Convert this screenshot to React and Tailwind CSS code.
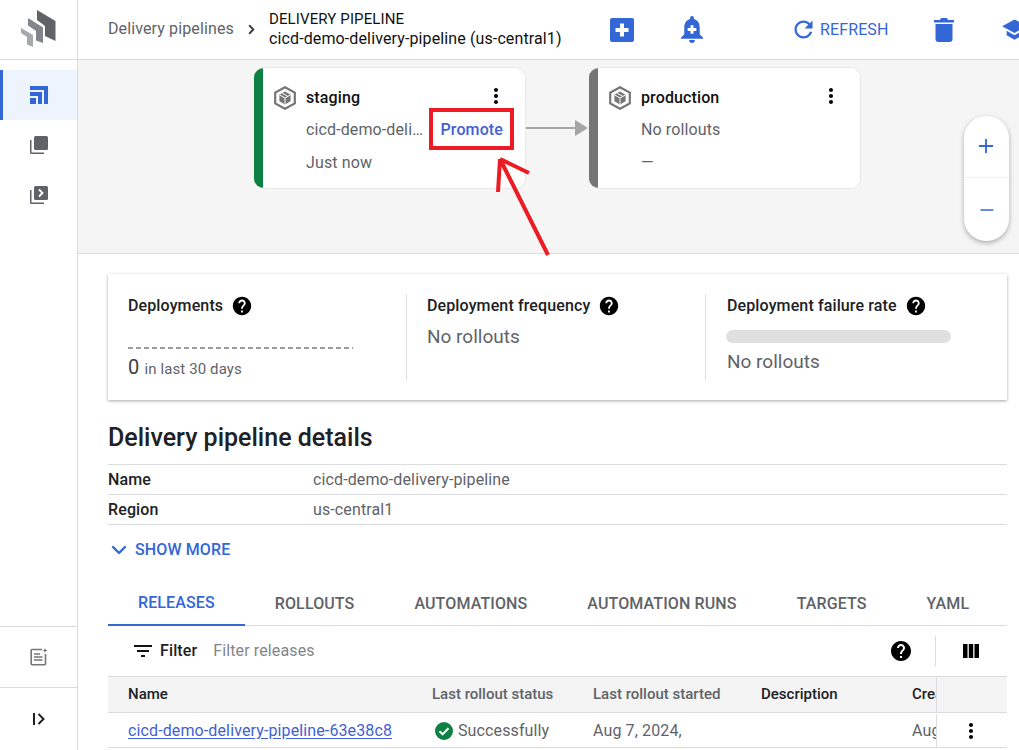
import { Plus, Minus, ChevronDown, ChevronRight } from 'lucide-react';

const Dots = ({ className = '' }) => (
  <svg viewBox="0 0 24 24" className={`w-6 h-6 ${className}`} fill="currentColor">
    <path d="M12 8c1.1 0 2-.9 2-2s-.9-2-2-2-2 .9-2 2 .9 2 2 2zm0 2c-1.1 0-2 .9-2 2s.9 2 2 2 2-.9 2-2-.9-2-2-2zm0 6c-1.1 0-2 .9-2 2s.9 2 2 2 2-.9 2-2-.9-2-2-2z" />
  </svg>
);

const Help = ({ className = '' }) => (
  <svg viewBox="0 0 24 24" className={`text-black shrink-0 ${className}`} fill="currentColor">
    <path d="M12 2C6.48 2 2 6.48 2 12s4.48 10 10 10 10-4.48 10-10S17.52 2 12 2zm1 17h-2v-2h2v2zm2.07-7.75l-.9.92C13.45 12.9 13 13.5 13 15h-2v-.5c0-1.1.45-2.1 1.17-2.83l1.24-1.26c.37-.36.59-.86.59-1.41 0-1.1-.9-2-2-2s-2 .9-2 2H8c0-2.21 1.79-4 4-4s4 1.79 4 4c0 .88-.36 1.68-.93 2.25z" />
  </svg>
);

const TargetIcon = () => (
  <svg viewBox="0 0 22 24" className="w-[22px] h-[24px] shrink-0 text-[#757575]" fill="none" stroke="currentColor">
    <path d="M11 1.2 20.8 6.6V17.4L11 22.8 1.2 17.4V6.6Z" strokeWidth="2.2" />
    <path d="M11 5.6 16.6 8.8V15.2L11 18.4 5.4 15.2V8.8Z" fill="currentColor" stroke="none" />
    <path d="M5.6 8.9 11 12 16.4 8.9M11 12V18.2M8.2 7.2 13.8 10.4" stroke="#fff" strokeWidth="1" />
  </svg>
);

const Logo = () => (
  <svg viewBox="0 0 48 44" className="w-12 h-11">
    <path d="M22 5 40.5 16V36L30 31V21L22 15Z" fill="#5f6368" />
    <path d="M13 13 28 22.5V38L21 35.5V26L13 20.5Z" fill="#80868b" />
    <path d="M6 23 18 30V42L12 39.5V32L6 28Z" fill="#a5a9ad" />
  </svg>
);

const PipelineNode = ({ name, barClass, line1, line2, promote, className }) => (
  <div className={`absolute top-[7px] w-[272px] h-[122px] bg-white rounded-[10px] border border-l-0 border-[#e8e8e8] overflow-hidden flex ${className}`}>
    <div className={`w-[9px] shrink-0 ${barClass}`} />
    <div className="relative flex-1 pl-[11px] pt-[16px]">
      <div className="flex items-center h-[28px]">
        <TargetIcon />
        <span className="ml-[10px] font-medium text-[#111]">{name}</span>
      </div>
      <Dots className="absolute right-[17px] top-[16px] text-black" />
      <div className="pl-[32px] mt-[1px] leading-[33px] text-[#5f6368]">
        <div className="flex justify-between pr-[22px]">
          <span>{line1}</span>
          {promote && <span className="font-medium text-[#3f5fd3]">Promote</span>}
        </div>
        <div>{line2}</div>
      </div>
    </div>
  </div>
);

const Metric = ({ title, children, className = '' }) => (
  <div className={`h-[86px] ${className}`}>
    <div className="flex items-center h-[24px] font-medium text-[#202124]">
      {title}
      <Help className="ml-[8px] w-[22px] h-[22px]" />
    </div>
    {children}
  </div>
);

const NavItem = ({ children, active }) => (
  <div className={`h-[50px] flex items-center justify-center ${active ? 'bg-[#eef4fd] border-l-[3px] border-[#3367d6] pr-[3px]' : ''}`}>
    {children}
  </div>
);

const TrashIcon = () => (
  <svg viewBox="0 0 20 24" className="ml-[45px] w-[20px] h-[24px] shrink-0" fill="#3367d6">
    <path d="M7 0H13L14 2H20V4.5H0V2H6Z" />
    <path d="M1.5 6H18.5V21A3 3 0 0 1 15.5 24H4.5A3 3 0 0 1 1.5 21Z" />
  </svg>
);

export default function App() {
  const tabs = ['RELEASES', 'ROLLOUTS', 'AUTOMATIONS', 'AUTOMATION RUNS', 'TARGETS', 'YAML'];

  return (
    <div className="relative w-[1019px] h-[750px] overflow-hidden flex bg-white font-['Roboto',sans-serif] text-[16px] tracking-[0.12px]">
      {/* Sidebar */}
      <aside className="w-[78px] shrink-0 border-r border-[#dadce0] flex flex-col">
        <div className="h-[60px] border-b border-[#dadce0] flex items-center justify-center pb-[6px]">
          <Logo />
        </div>
        <div className="pt-[10px] flex-1">
          <NavItem active>
            <svg viewBox="0 0 18 18" className="w-[18px] h-[18px]" fill="#3367d6">
              <path d="M0 0H18V18H14V4H0Z M0 6H12V18H8V10H0Z M0 12H6V18H0Z" />
            </svg>
          </NavItem>
          <NavItem>
            <svg viewBox="0 0 18 18" className="w-[18px] h-[18px]" fill="#5f6368">
              <rect x="4" y="0" width="14" height="14" rx="1.5" />
              <path d="M0 4H1.5V16.5H14V18H1.5A1.5 1.5 0 0 1 0 16.5Z" />
            </svg>
          </NavItem>
          <NavItem>
            <svg viewBox="0 0 18 18" className="w-[18px] h-[18px]" fill="#5f6368">
              <rect x="4" y="0" width="14" height="14" rx="1.5" />
              <path d="M0 4H1.5V16.5H14V18H1.5A1.5 1.5 0 0 1 0 16.5Z" />
              <path d="M9 3.5 12.5 7 9 10.5" fill="none" stroke="#fff" strokeWidth="1.8" />
            </svg>
          </NavItem>
        </div>
        <div className="h-[61px] border-t border-[#dadce0] flex items-center justify-center">
          <svg viewBox="0 0 18 18" className="w-[18px] h-[18px]" fill="none" stroke="#757575" strokeWidth="1.6">
            <path d="M12 1.5H2.2A1 1 0 0 0 1.2 2.5V15.8A1 1 0 0 0 2.2 16.8H14.5A1 1 0 0 0 15.5 15.8V6" />
            <path d="M4 6H10M4 9H12.5M4 12H12.5" />
            <path d="M15 0 15.7 1.8 17.5 2.5 15.7 3.2 15 5 14.3 3.2 12.5 2.5 14.3 1.8Z" fill="#757575" stroke="none" />
          </svg>
        </div>
        <div className="h-[63px] border-t border-[#dadce0] flex items-center justify-center">
          <svg viewBox="0 0 14 12" className="w-[14px] h-[12px]" fill="none" stroke="#202124" strokeWidth="2">
            <path d="M2 0V12M6.5 1 11.5 6 6.5 11" />
          </svg>
        </div>
      </aside>

      <main className="flex-1 min-w-0 flex flex-col">
        {/* Top bar */}
        <header className="h-[60px] shrink-0 border-b border-[#dadce0] flex items-center overflow-hidden">
          <span className="ml-[30px] w-[125px] text-[#5f6368] shrink-0 pb-[2px] whitespace-nowrap">Delivery pipelines</span>
          <ChevronRight className="ml-[11px] w-[15px] h-[15px] shrink-0 text-[#3c4043]" strokeWidth={3} />
          <div className="ml-[10px] w-[341px] shrink-0 leading-[20px] text-[#111] pb-[1px]">
            <div className="text-[15px]">DELIVERY PIPELINE</div>
            <div>cicd-demo-delivery-pipeline (us-central1)</div>
          </div>
          <svg viewBox="0 0 24 24" className="w-[24px] h-[24px] shrink-0" fill="#3367d6">
            <path d="M2 0H22A2 2 0 0 1 24 2V22A2 2 0 0 1 22 24H2A2 2 0 0 1 0 22V2A2 2 0 0 1 2 0Z" />
            <path d="M10 5.5H14V10H18.5V14H14V18.5H10V14H5.5V10H10Z" fill="#fff" />
          </svg>
          <svg viewBox="0 0 24 28" className="ml-[46px] w-[24px] h-[27px] shrink-0" fill="#3367d6">
            <path d="M12 0A2 2 0 0 1 14 2V3.2C18 4.2 20 7.8 20 12V19L23.5 22.5V23.5H.5V22.5L4 19V12C4 7.8 6 4.2 10 3.2V2A2 2 0 0 1 12 0Z" />
            <path d="M9 25H15A3 3 0 0 1 9 25Z" />
            <path d="M10.5 9.5H13.5V12.5H16.5V15.5H13.5V18.5H10.5V15.5H7.5V12.5H10.5Z" fill="#fff" />
          </svg>
          <div className="ml-[86px] flex items-center text-[#3367d6] shrink-0">
            <svg viewBox="0 0 24 24" className="w-[27px] h-[27px] mr-[3px]" fill="currentColor">
              <path d="M17.65 6.35C16.2 4.9 14.21 4 12 4c-4.42 0-7.99 3.58-7.99 8s3.57 8 7.99 8c3.73 0 6.84-2.55 7.73-6h-2.08c-.82 2.33-3.04 4-5.65 4-3.31 0-6-2.69-6-6s2.69-6 6-6c1.66 0 3.14.69 4.22 1.78L13 11h7V4l-2.35 2.35z" />
            </svg>
            <span>REFRESH</span>
          </div>
          <TrashIcon />
          <svg viewBox="0 0 24 24" className="ml-[47px] w-[27px] h-[27px] shrink-0" fill="#3367d6">
            <path d="M5 13.18v4L12 21l7-3.82v-4L12 17l-7-3.82zM12 3L1 9l11 6 9-4.91V17h2V9L12 3z" />
          </svg>
        </header>

        {/* Pipeline canvas */}
        <section className="relative h-[194px] shrink-0 bg-[#f5f5f5] border-b border-[#dadce0]">
          <PipelineNode
            name="staging"
            barClass="bg-[#0d8043]"
            line1="cicd-demo-deli…"
            line2="Just now"
            promote
            className="left-[176px]"
          />
          <div className="absolute left-[448px] top-[67px] w-[50px] h-[2px] bg-[#a6a6a6]" />
          <div className="absolute left-[497px] top-[60px] w-0 h-0 border-y-[8px] border-y-transparent border-l-[13px] border-l-[#a6a6a6]" />
          <PipelineNode
            name="production"
            barClass="bg-[#757575]"
            line1="No rollouts"
            line2="—"
            className="left-[511px]"
          />
          <div className="absolute left-[886px] top-[56px] w-[45px] h-[125px] bg-white rounded-[22px] shadow-[0_2px_5px_rgba(0,0,0,0.3)] flex flex-col text-[#3367d6]">
            <div className="h-[62px] border-b border-[#f1f1f1] flex items-center justify-center pb-[1px] pr-[1px]">
              <Plus className="w-[22px] h-[22px]" strokeWidth={2} />
            </div>
            <div className="flex-1 flex items-center justify-center">
              <Minus className="w-[20px] h-[20px]" strokeWidth={2} />
            </div>
          </div>
        </section>

        {/* Content */}
        <section className="pl-[30px] pr-[12px]">
          <div className="mt-[20px] h-[126px] bg-white shadow-[0_1px_3px_rgba(0,0,0,0.35)] flex pt-[20px] pl-[20px]">
            <Metric title="Deployments" className="border-r border-[#dadce0] mr-[20px] w-[279px] shrink-0">
              <div className="mt-[29px] h-[2px] w-[225px] bg-[repeating-linear-gradient(90deg,#9e9e9e_0,#9e9e9e_5px,transparent_5px,transparent_8px)]" />
              <div className="mt-[4px] flex items-baseline h-[28px]">
                <span className="text-[20px] leading-[28px] text-[#3c4043]">0</span>
                <span className="ml-[5px] text-[15px] text-[#5f6368]">in last 30 days</span>
              </div>
            </Metric>
            <Metric title="Deployment frequency" className="border-r border-[#dadce0] mr-[21px] w-[279px] shrink-0">
              <div className="mt-[5px] text-[19px] tracking-normal text-[#5f6368]">No rollouts</div>
            </Metric>
            <Metric title="Deployment failure rate" className="flex-1">
              <div className="mt-[12px] -ml-[1px] w-[225px] h-[13px] rounded-full bg-[#e0e0e0]" />
              <div className="mt-[5px] text-[19px] tracking-normal text-[#5f6368]">No rollouts</div>
            </Metric>
          </div>

          <h2 className="mt-[21px] text-[25px] tracking-normal leading-[34px] font-medium text-[#202124]">Delivery pipeline details</h2>
          <div className="mt-[9px] border-t border-[#dadce0]">
            <div className="h-[30px] pt-[1px] border-b border-[#dadce0] flex items-center">
              <span className="w-[205px] font-medium text-[#202124]">Name</span>
              <span className="text-[#5f6368]">cicd-demo-delivery-pipeline</span>
            </div>
            <div className="h-[30px] pt-[1px] border-b border-[#dadce0] flex items-center">
              <span className="w-[205px] font-medium text-[#202124]">Region</span>
              <span className="text-[#5f6368]">us-central1</span>
            </div>
          </div>
          <div className="mt-[13px] h-[24px] flex items-center text-[#3367d6] font-medium">
            <ChevronDown className="w-[24px] h-[24px] -ml-[1px] mr-[4px]" strokeWidth={2.4} />
            SHOW MORE
          </div>

          {/* Tabs */}
          <div className="mt-[22px] h-[42px] border-b border-[#dadce0] flex font-medium text-[#5f6368]">
            {tabs.map((t, i) => (
              <div
                key={t}
                className={`h-[42px] px-[30px] flex items-center pb-[2px] shrink-0 ${
                  i === 0 ? 'text-[#3367d6] border-b-2 border-[#3367d6]' : ''
                }`}
              >
                {t}
              </div>
            ))}
          </div>

          {/* Filter row */}
          <div className="h-[50px] flex items-center pl-[26px] pr-[28px]">
            <svg viewBox="0 0 18 12" className="w-[18px] h-[12px] text-[#111]" fill="currentColor">
              <path d="M0 0H18V2H0ZM3 5H15V7H3ZM7 10H11V12H7Z" />
            </svg>
            <span className="ml-[8px] font-medium text-[#202124]">Filter</span>
            <span className="ml-[16px] text-[#80868b]">Filter releases</span>
            <Help className="ml-auto w-[24px] h-[24px] mr-[22px]" />
            <div className="w-px h-[30px] bg-[#dadce0] mr-[27px]" />
            <svg viewBox="0 0 16 14" className="w-[16px] h-[14px] text-black" fill="currentColor">
              <path d="M0 0H4.5V14H0ZM5.8 0H10.2V14H5.8ZM11.5 0H16V14H11.5Z" />
            </svg>
          </div>

          {/* Releases table */}
          <div className="border-t border-[#dadce0]">
            <div className="h-[36px] bg-[#f4f4f4] border-b border-[#dadce0] flex items-center text-[15px] tracking-normal font-medium overflow-hidden">
              <span className="w-[324px] pl-[20px] shrink-0 text-[#202124]">Name</span>
              <span className="w-[161px] shrink-0 text-[#5f6368]">Last rollout status</span>
              <span className="w-[168px] shrink-0 text-[#5f6368]">Last rollout started</span>
              <span className="w-[151px] shrink-0 text-[#202124]">Description</span>
              <span className="w-[24px] shrink-0 overflow-hidden whitespace-nowrap text-[#202124]">Created</span>
              <span className="h-full border-l border-[#dadce0] w-[71px] shrink-0" />
            </div>
            <div className="h-[35px] pt-[1px] border-b border-[#dadce0] flex items-center overflow-hidden">
              <a className="w-[324px] pl-[20px] shrink-0 text-[#3f5fd3] underline underline-offset-2 whitespace-nowrap">cicd-demo-delivery-pipeline-63e38c8</a>
              <span className="w-[161px] shrink-0 flex items-center text-[#5f6368]">
                <svg viewBox="0 0 18 18" className="w-[18px] h-[18px] ml-[3px] mr-[5px]">
                  <circle cx="9" cy="9" r="9" fill="#0d8043" />
                  <path d="M4.5 9.3 7.6 12.3 13.5 6.3" fill="none" stroke="#fff" strokeWidth="2" />
                </svg>
                Successfully
              </span>
              <span className="w-[168px] shrink-0 text-[#5f6368]">Aug 7, 2024,</span>
              <span className="w-[151px] shrink-0" />
              <span className="w-[24px] shrink-0 overflow-hidden text-[#5f6368]">Aug</span>
              <span className="h-full border-l border-[#dadce0] w-[71px] shrink-0 flex items-center justify-center pr-[3px]">
                <Dots className="text-black" />
              </span>
            </div>
          </div>
        </section>
      </main>

      {/* Red annotation drawn over the screenshot */}
      <div className="absolute left-[429px] top-[108px] w-[85px] h-[42px] border-[4px] border-[#ed1c24]" />
      <svg className="absolute left-0 top-0 pointer-events-none" width="1019" height="750" fill="none" stroke="#ed1c24" strokeWidth="4">
        <path d="M548 255 500 159M500 159 498 192M500 159 529 173" />
      </svg>
    </div>
  );
}
